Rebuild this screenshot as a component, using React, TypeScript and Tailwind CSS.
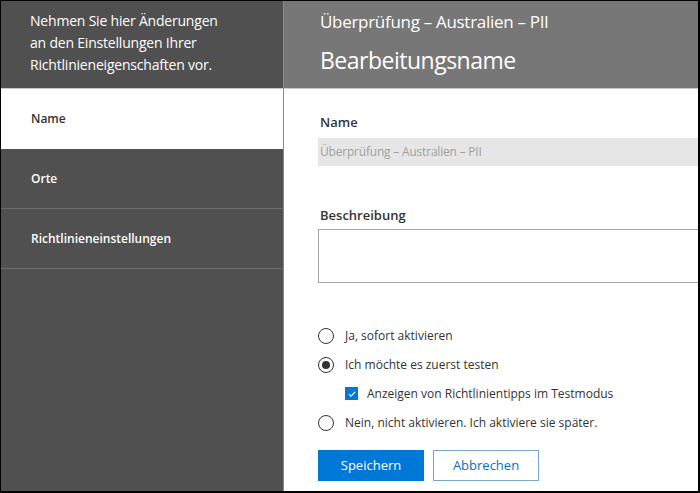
import React from "react";

const font = { fontFamily: '"Open Sans", "Noto Sans", sans-serif' };

function Radio({ checked, label }: { checked?: boolean; label: string }) {
  return (
    <div className="flex items-center h-[29px]">
      <span className="flex items-center justify-center w-[16px] h-[16px] rounded-full border-[1.5px] border-[#333] shrink-0">
        {checked && <span className="w-[8px] h-[8px] rounded-full bg-[#333]" />}
      </span>
      <span className="ml-[11px] text-[12px] text-[#333] whitespace-nowrap">{label}</span>
    </div>
  );
}

export default function App() {
  return (
    <div
      className="w-[700px] h-[493px] border-t border-l border-r-2 border-b-2 border-black flex overflow-hidden bg-white"
      style={font}
    >
      {/* left column */}
      <aside className="w-[283px] shrink-0 flex flex-col bg-[#505050] border-r border-[#8a8a8a]">
        <div className="h-[88px] shrink-0 border-b border-[#c8c8c8] pl-[29px] pt-[9px] text-white text-[14px] leading-[22px] tracking-[-0.2px]">
          <div>Nehmen Sie hier Änderungen</div>
          <div>an den Einstellungen Ihrer</div>
          <div>Richtlinieneigenschaften vor.</div>
        </div>
        <nav className="flex flex-col">
          <div className="h-[60px] flex items-center pl-[30px] bg-white text-[#333] text-[12px] font-semibold">
            Name
          </div>
          <div className="h-[60px] flex items-center pl-[30px] border-b border-[#6e6e6e] text-white text-[12px] font-semibold">
            Orte
          </div>
          <div className="h-[60px] flex items-center pl-[30px] border-b border-[#6e6e6e] text-white text-[12px] font-semibold">
            Richtlinieneinstellungen
          </div>
        </nav>
      </aside>

      {/* right column */}
      <main className="flex-1 flex flex-col min-w-0 overflow-hidden">
        <header className="h-[88px] shrink-0 bg-[#777777] border-b border-[#c8c8c8] pl-[36px] text-white">
          <div className="pt-[9px] text-[17px] leading-[24px] tracking-[-0.3px] whitespace-nowrap">
            Überprüfung – Australien – PII
          </div>
          <div className="mt-[11px] text-[23px] leading-[30px] tracking-[-0.5px] whitespace-nowrap">
            Bearbeitungsname
          </div>
        </header>

        <div className="flex flex-col pl-[34px] pt-[24px]">
          <label className="pl-[2px] text-[13px] leading-[18px] font-semibold text-[#333]">Name</label>
          <div className="mt-[7px] w-[420px] h-[28px] bg-[#e6e6e6] flex items-center pl-[2px] text-[12px] text-[#a0a0a0] whitespace-nowrap tracking-[-0.2px]">
            Überprüfung – Australien – PII
          </div>

          <label className="mt-[40px] pl-[2px] text-[13px] leading-[18px] font-semibold text-[#333]">Beschreibung</label>
          <div className="mt-[5px] w-[420px] h-[54px] border border-[#a6a6a6] bg-white" />

          <div className="mt-[38px] flex flex-col">
            <Radio label="Ja, sofort aktivieren" />
            <Radio checked label="Ich möchte es zuerst testen" />
            <div className="flex items-center h-[29px] pl-[27px]">
              <span className="flex items-center justify-center w-[13px] h-[13px] bg-[#0078d7] shrink-0">
                <svg width="10" height="10" viewBox="0 0 10 10" fill="none">
                  <path d="M2 5.2 L4 7.2 L8.2 2.8" stroke="white" strokeWidth="1.2" />
                </svg>
              </span>
              <span className="ml-[9px] text-[12px] text-[#333] whitespace-nowrap">
                Anzeigen von Richtlinientipps im Testmodus
              </span>
            </div>
            <Radio label="Nein, nicht aktivieren. Ich aktiviere sie später." />
          </div>

          <div className="mt-[13px] flex gap-[9px]">
            <button className="w-[106px] h-[31px] bg-[#0078d7] text-white text-[13px]">Speichern</button>
            <button className="w-[106px] h-[31px] bg-white border border-[#7aa6cc] text-[#106ebe] text-[13px]">
              Abbrechen
            </button>
          </div>
        </div>
      </main>
    </div>
  );
}
